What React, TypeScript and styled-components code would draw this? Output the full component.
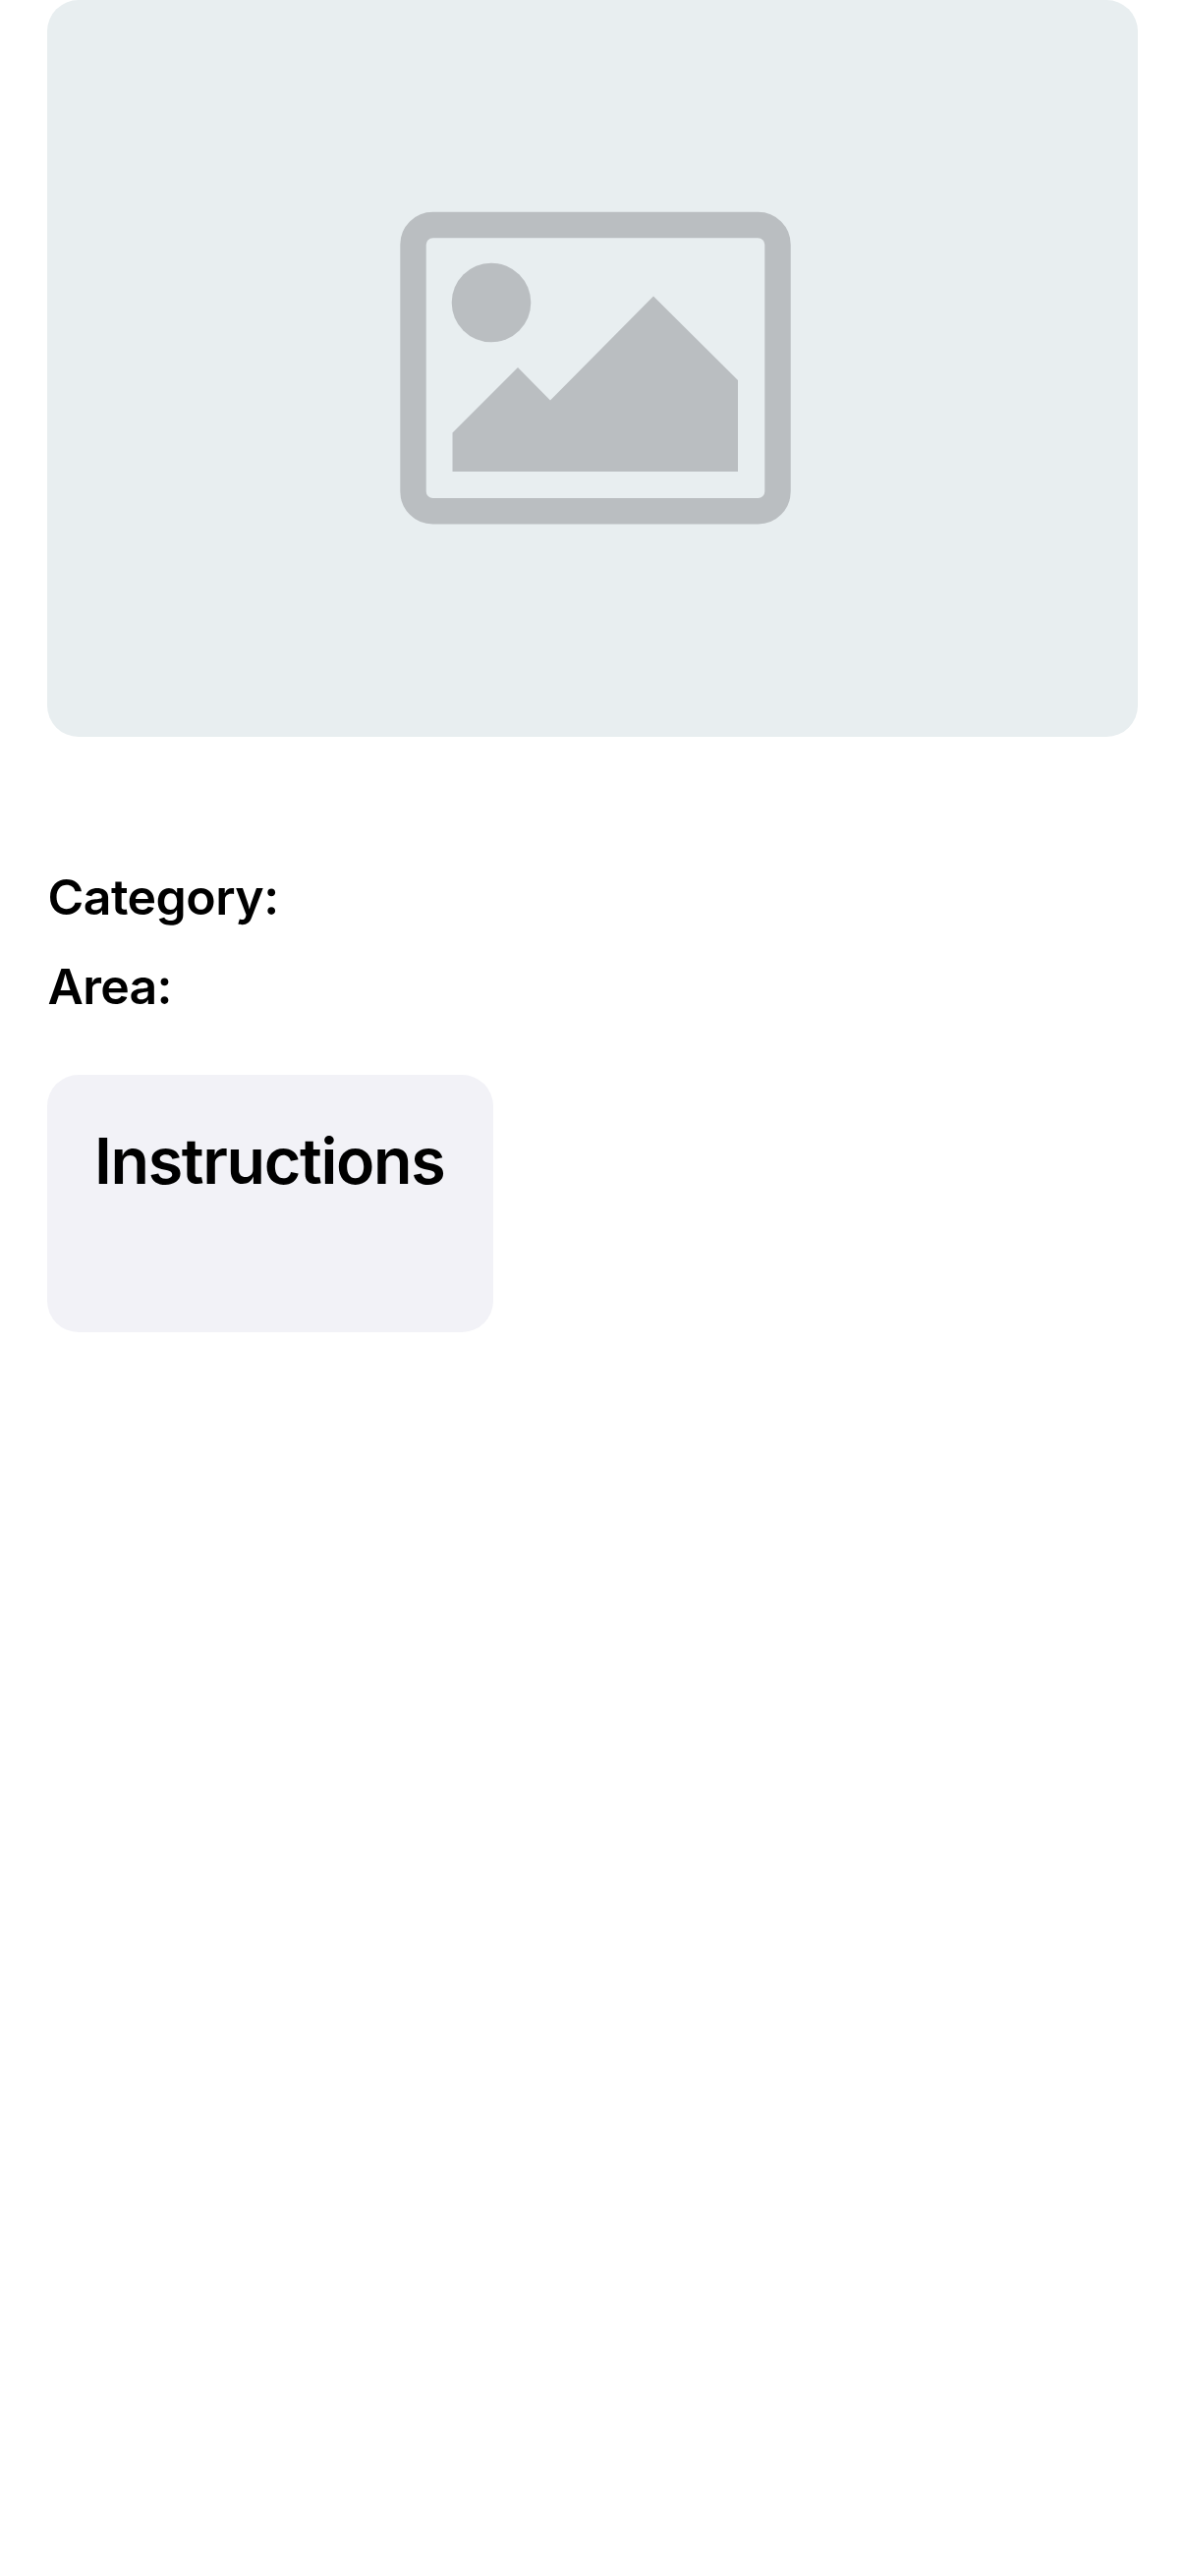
import React from 'react';
import styled, { createGlobalStyle } from 'styled-components';

const GlobalStyle = createGlobalStyle`
  *, *::before, *::after { box-sizing: border-box; }
  body {
    margin: 0;
    background: #ffffff;
    color: #000000;
    font-family: Inter, "Liberation Sans", sans-serif;
  }
`;

const Page = styled.main`
  display: flex;
  flex-direction: column;
  align-items: flex-start;
  min-height: 2622px;
  padding: 0 48px;
`;

const Thumbnail = styled.div`
  display: flex;
  align-self: stretch;
  height: 750px;
  border-radius: 32px;
  background: #e8eef0;
  overflow: hidden;
`;

const PictureIcon = styled.svg`
  display: block;
  width: 1110px;
  height: 750px;
  filter: blur(0.7px);
`;

const Details = styled.section`
  display: flex;
  flex-direction: column;
  gap: 30px;
  margin-top: 133px;
  padding-left: 0.5px;
`;

const Label = styled.p<{ $tracking: number }>`
  margin: 0;
  font-size: 50px;
  font-weight: 600;
  line-height: 61px;
  letter-spacing: ${({ $tracking }) => $tracking}px;
  white-space: nowrap;
`;

const InstructionsCard = styled.section`
  width: 454px;
  height: 262px;
  margin-top: 59px;
  padding: 48px;
  border-radius: 32px;
  background: #f2f2f7;
`;

const Heading = styled.h2`
  margin: 0;
  font-size: 64.6px;
  font-weight: 600;
  line-height: 80px;
  letter-spacing: -1.35px;
  white-space: nowrap;
`;

export default function App() {
  return (
    <>
      <GlobalStyle />
      <Page>
        <Thumbnail>
          <PictureIcon viewBox="48 0 1110 750" fill="#babec1" aria-hidden="true">
            <rect x="420.5" y="229" width="371" height="291.3" rx="20" fill="none" stroke="#babec1" strokeWidth="26.4" />
            <circle cx="500" cy="308" r="40.3" />
            <path d="M460.5 440.5 527 374l33 33.5L665 301.5l86 85.500V480H460.500Z" />
          </PictureIcon>
        </Thumbnail>
        <Details>
          <Label $tracking={-0.55}>Category:</Label>
          <Label $tracking={-0.7}>Area:</Label>
        </Details>
        <InstructionsCard>
          <Heading>Instructions</Heading>
        </InstructionsCard>
      </Page>
    </>
  );
}
